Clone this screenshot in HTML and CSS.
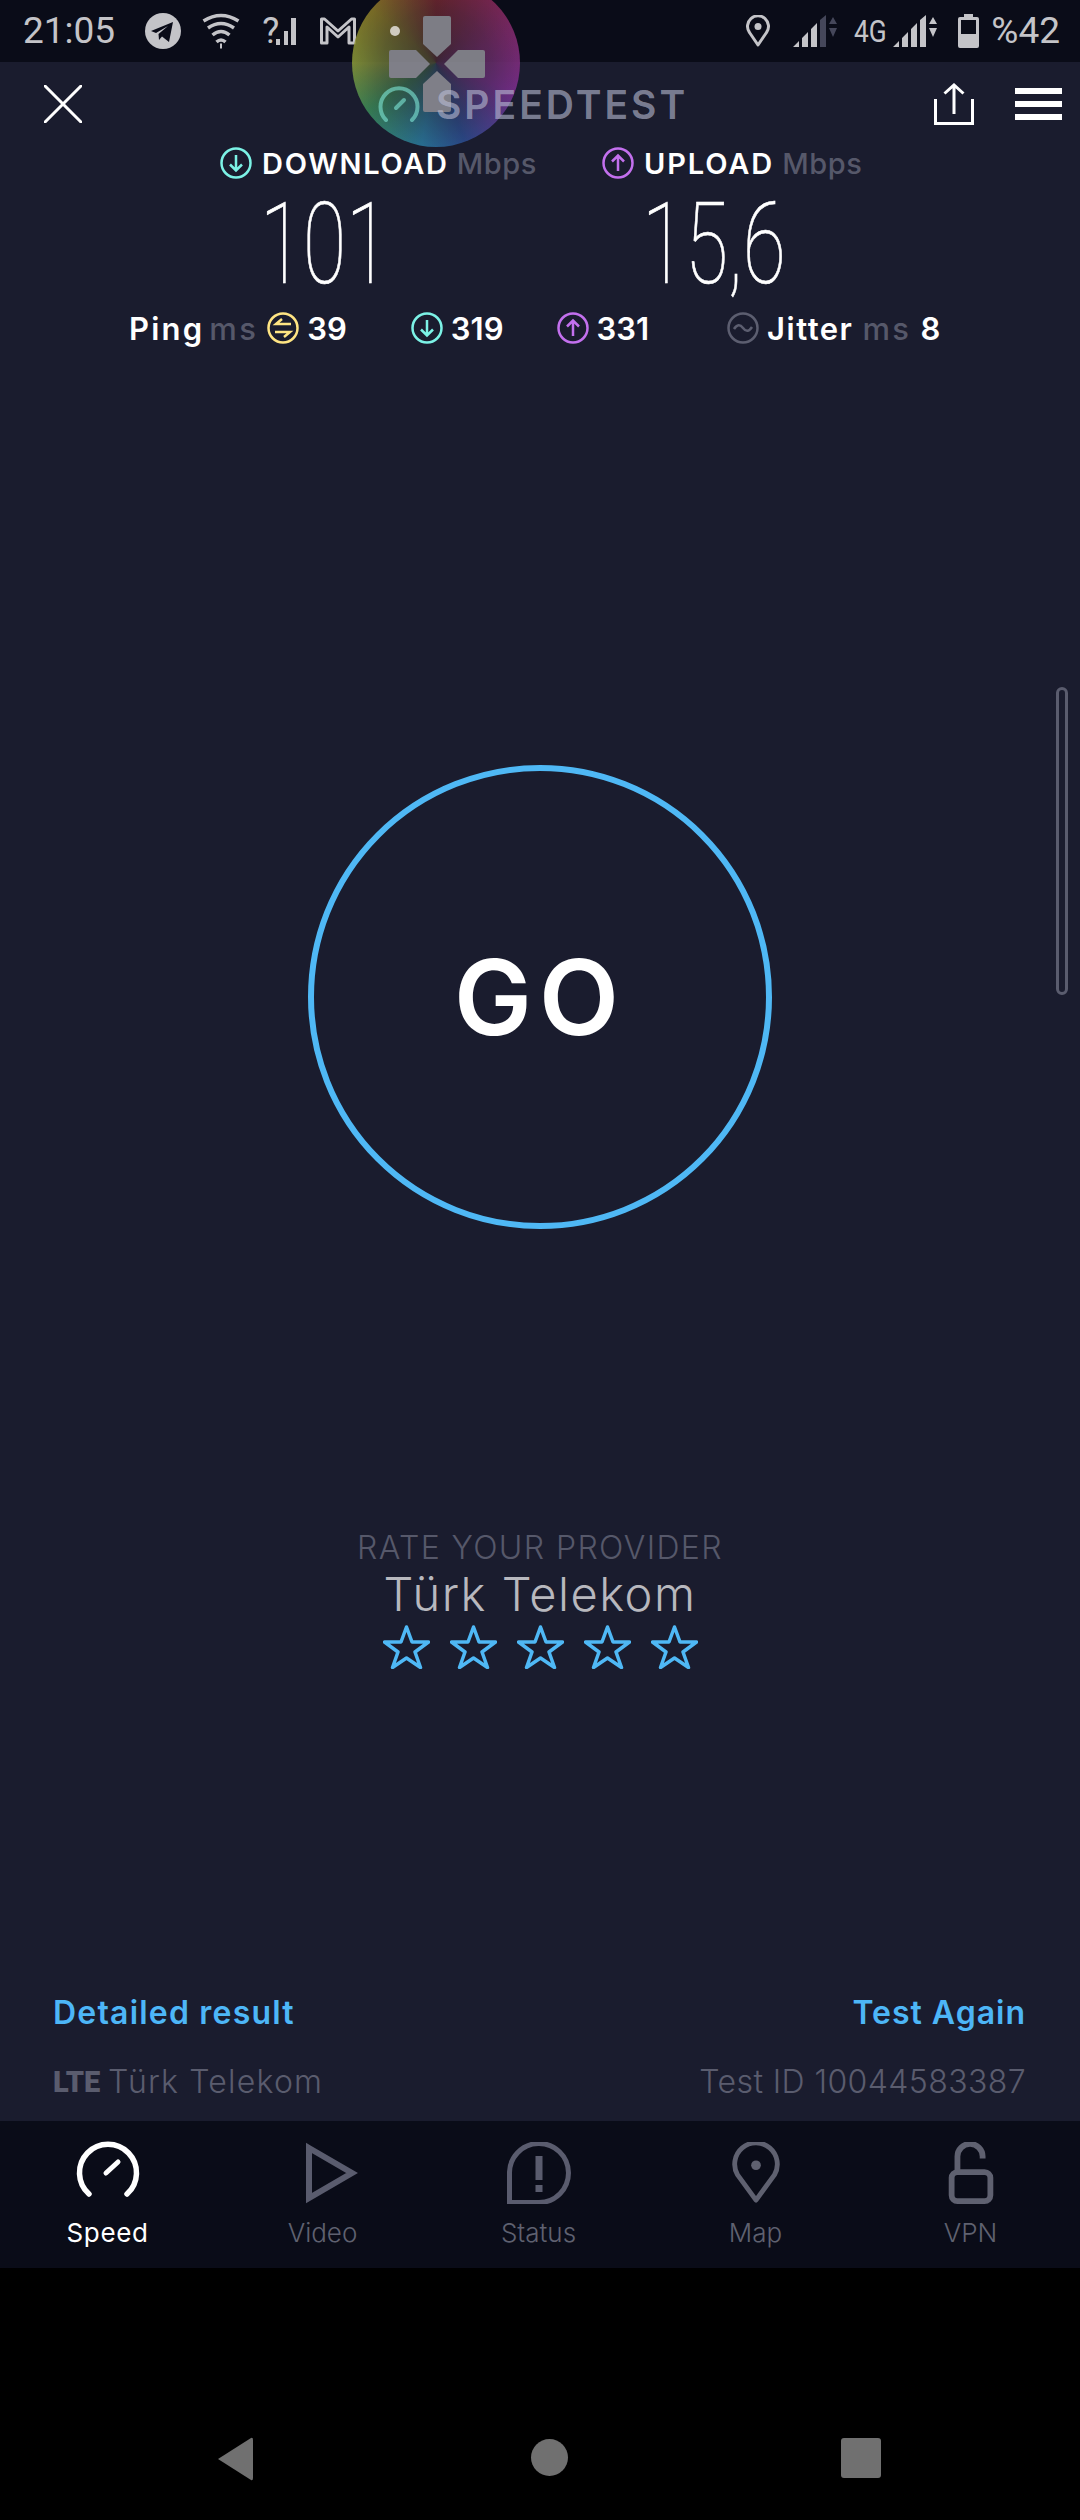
FILE: index.html
```html
<!DOCTYPE html>
<html lang="en">
<head>
    <meta charset="UTF-8">
    <meta name="viewport" content="width=device-width, initial-scale=1.0">
    <title>Speedtest</title>
    <link rel="stylesheet" href="styles.css">
</head>
<body>
    <div class="phone">
        <div class="statusbar">
            <span class="clock">21:05</span>
            <svg class="st-telegram" width="36" height="36" viewBox="0 0 36 36"><circle cx="18" cy="18" r="18" fill="#c4c4c8"/><path d="M6 18 L28 9 L24 29 L17 23.500 L14 27 L13.500 21 L23 13 L11 20 Z" fill="#0a0c18"/></svg>
            <svg class="st-wifi" width="38" height="36" viewBox="0 0 38 36" fill="none" stroke="#c4c4c8" stroke-width="3.500"><path d="M1.500 8 Q19 -3 36.500 8"/><path d="M6 15 Q19 6 32 15"/><path d="M10.500 22 Q19 15 27.500 22"/><path d="M14.500 29 Q19 25 23.500 29"/><path d="M18 33 h2" stroke-width="5"/></svg>
            <span class="st-unknown">?</span>
            <svg class="st-bars" width="20" height="28" viewBox="0 0 20 28" fill="#c4c4c8"><rect x="0" y="22" width="4" height="6"/><rect x="8" y="14" width="4" height="14"/><rect x="15" y="1" width="5" height="27"/></svg>
            <svg class="st-gmail" width="36" height="28" viewBox="0 0 36 28" fill="none" stroke="#c4c4c8" stroke-width="3" stroke-linejoin="round"><path d="M1.500 26 V2 H4.500 L18 14 L31.500 2 H34.500 V26 H29 V10 L18 20 L7 10 V26 Z"/></svg>
            <div class="st-right">
                <svg class="st-pin" width="24" height="32" viewBox="0 0 24 32" fill="none" stroke="#c4c4c8" stroke-width="3"><path d="M12 30 L3.500 17.500 A10.500 10.500 0 1 1 20.500 17.500 Z" stroke-linejoin="round"/><circle cx="12" cy="11.500" r="3.500" fill="#c4c4c8" stroke="none"/></svg>
                <svg class="st-signal-a" width="45" height="32" viewBox="0 0 45 32"><path d="M0 32 L6 26 V32 Z M9 23 L15 17 V32 H9 Z M18 14 L24 8 V32 H18 Z" fill="#c4c4c8"/><path d="M27 5 L33 0 V32 H27 Z" fill="#45475a"/><path d="M36 9 L40 2 L44 9 Z M36 13 H44 L40 22 Z" fill="#45475a"/></svg>
                <span class="st-net">4G</span>
                <svg class="st-signal-b" width="45" height="32" viewBox="0 0 45 32"><path d="M0 32 L6 26 V32 Z M9 23 L15 17 V32 H9 Z M18 14 L24 8 V32 H18 Z M27 5 L33 0 V32 H27 Z" fill="#c4c4c8"/><path d="M36 9 L40 2 L44 9 Z M36 13 H44 L40 22 Z" fill="#c4c4c8"/></svg>
                <svg class="st-battery" width="21" height="34" viewBox="0 0 21 34"><path d="M6 0 H15 V3 H19 Q21 3 21 5 V32 Q21 34 19 34 H2 Q0 34 0 32 V5 Q0 3 2 3 H6 Z" fill="#c4c4c8"/><rect x="3" y="6" width="15" height="14" fill="#0a0c18"/></svg>
                <span class="clock st-percent">%42</span>
            </div>
        </div>

        <main class="main">
            <header class="topbar">
                <svg class="close-icon" width="38" height="38" viewBox="0 0 38 38" stroke="#fff" stroke-width="3" stroke-linecap="round"><path d="M1 1 L37 37 M37 1 L1 37"/></svg>
                <div class="logo">
                    <svg class="logo-gauge" width="42" height="36" viewBox="0 0 42 36" fill="none" stroke="#7fe8d8" stroke-width="4" stroke-linecap="round"><path d="M8 34 A18.500 18.500 0 1 1 34 34"/><path d="M18 22 L26 14"/></svg>
                    <span class="logo-text">SPEEDTEST</span>
                </div>
                <div class="actions">
                    <svg width="40" height="42" viewBox="0 0 40 42" fill="none" stroke="#fff" stroke-width="3"><path d="M1.500 16 V40.500 H38.500 V16"/><path d="M20 31 V2 M10.500 10.500 L20 2 L29.500 10.500"/></svg>
                    <div class="menu-icon"><span></span><span></span><span></span></div>
                </div>
            </header>

            <section class="speeds">
                <div class="speed-col">
                    <div class="speed-label">
                        <svg class="dir-icon" viewBox="0 0 32 32" fill="none" stroke="#7cf2e6" stroke-width="2.500"><circle cx="16" cy="16" r="14.500"/><path d="M16 8 V23 M10 17.500 L16 23.500 L22 17.500"/></svg>
                        <b class="label-down">DOWNLOAD</b><span class="unit">Mbps</span>
                    </div>
                    <div class="speed-value">101</div>
                </div>
                <div class="speed-col">
                    <div class="speed-label">
                        <svg class="dir-icon" viewBox="0 0 32 32" fill="none" stroke="#c370ee" stroke-width="2.500"><circle cx="16" cy="16" r="14.500"/><path d="M16 24 V9 M10 14.500 L16 8.500 L22 14.500"/></svg>
                        <b class="label-up">UPLOAD</b><span class="unit">Mbps</span>
                    </div>
                    <div class="speed-value">15,6</div>
                </div>
            </section>

            <section class="latency">
                <b class="lat-ping">Ping</b><span class="unit lat-ms">ms</span>
                <svg class="dir-icon lat-icon-ping" viewBox="0 0 32 32" fill="none" stroke="#ffe583" stroke-width="2.500"><circle cx="16" cy="16" r="14.500"/><path d="M24 12 H9 L15 7 M8 20 H23 L17 25"/></svg>
                <b class="lat-num">39</b>
                <svg class="dir-icon lat-icon-down" viewBox="0 0 32 32" fill="none" stroke="#7cf2e6" stroke-width="2.500"><circle cx="16" cy="16" r="14.500"/><path d="M16 8 V23 M10 17.500 L16 23.500 L22 17.500"/></svg>
                <b class="lat-num">319</b>
                <svg class="dir-icon lat-icon-up" viewBox="0 0 32 32" fill="none" stroke="#c370ee" stroke-width="2.500"><circle cx="16" cy="16" r="14.500"/><path d="M16 24 V9 M10 14.500 L16 8.500 L22 14.500"/></svg>
                <b class="lat-num">331</b>
                <svg class="dir-icon lat-icon-jitter" viewBox="0 0 32 32" fill="none" stroke="#5c5e70" stroke-width="2.500"><circle cx="16" cy="16" r="14.500"/><path d="M7 17 Q11.500 10 16 16 T25 15"/></svg>
                <b class="lat-jitter">Jitter</b><span class="unit lat-ms2">ms</span><b class="lat-num lat-eight">8</b>
            </section>

            <div class="go-wrap"><div class="go-circle">GO</div></div>

            <section class="rate">
                <div class="rate-title">RATE YOUR PROVIDER</div>
                <div class="rate-name">Türk Telekom</div>
                <div class="stars">
                    <svg width="47" height="44" viewBox="0 0 47 44"><path class="star" d="M23.500 2 L29 17 H45.500 L32 27 L37.500 42.500 L23.500 33 L9.500 42.500 L15 27 L1.500 17 H18 Z"/></svg>
                    <svg width="47" height="44" viewBox="0 0 47 44"><path class="star" d="M23.500 2 L29 17 H45.500 L32 27 L37.500 42.500 L23.500 33 L9.500 42.500 L15 27 L1.500 17 H18 Z"/></svg>
                    <svg width="47" height="44" viewBox="0 0 47 44"><path class="star" d="M23.500 2 L29 17 H45.500 L32 27 L37.500 42.500 L23.500 33 L9.500 42.500 L15 27 L1.500 17 H18 Z"/></svg>
                    <svg width="47" height="44" viewBox="0 0 47 44"><path class="star" d="M23.500 2 L29 17 H45.500 L32 27 L37.500 42.500 L23.500 33 L9.500 42.500 L15 27 L1.500 17 H18 Z"/></svg>
                    <svg width="47" height="44" viewBox="0 0 47 44"><path class="star" d="M23.500 2 L29 17 H45.500 L32 27 L37.500 42.500 L23.500 33 L9.500 42.500 L15 27 L1.500 17 H18 Z"/></svg>
                </div>
            </section>

            <footer class="result">
                <div class="result-row">
                    <a class="link link-detail">Detailed result</a>
                    <a class="link link-again">Test Again</a>
                </div>
                <div class="result-row info-row">
                    <span class="provider"><b class="lte">LTE</b><span class="provider-name">Türk Telekom</span></span>
                    <span class="test-id">Test ID 10044583387</span>
                </div>
            </footer>

            <div class="scroll-thumb"></div>
        </main>

        <nav class="tabs">
            <div class="tab active">
                <svg width="64" height="56" viewBox="0 0 64 56" fill="none" stroke="#fff" stroke-width="5.500" stroke-linecap="round"><path d="M13 52 A28.500 28.500 0 1 1 51 52"/><path d="M30 31 L42 20" stroke-width="5"/></svg>
                <span>Speed</span>
            </div>
            <div class="tab">
                <svg class="video-icon" width="54" height="62" viewBox="0 0 54 62" fill="none" stroke="#5a5c6e" stroke-width="6"><path d="M4 6 L47 31 L4 56 Z"/></svg>
                <span>Video</span>
            </div>
            <div class="tab">
                <svg width="64" height="62" viewBox="0 0 64 62" fill="none" stroke="#5a5c6e" stroke-width="5"><path d="M2.500 60 V32 A29.500 29.500 0 1 1 32 60.500 H2.500 Z"/><path d="M32 14 V38" stroke-width="7"/><path d="M32 43 V50" stroke-width="7"/></svg>
                <span>Status</span>
            </div>
            <div class="tab">
                <svg width="50" height="64" viewBox="0 0 50 64" fill="none" stroke="#5f6170" stroke-width="5"><path d="M25 60 L6 34 A22 22 0 1 1 44 34 Z" stroke-linejoin="round"/><circle cx="25" cy="24" r="5" fill="#5f6170" stroke="none"/></svg>
                <span>Map</span>
            </div>
            <div class="tab">
                <svg width="46" height="64" viewBox="0 0 46 64" fill="none" stroke="#5f6170" stroke-width="6"><rect x="3" y="31" width="40" height="30" rx="6"/><path d="M9 31 V15 A13 13 0 0 1 35 15 V17"/></svg>
                <span>VPN</span>
            </div>
        </nav>

        <div class="softkeys">
            <svg width="38" height="44" viewBox="0 0 38 44"><path d="M2 22 L35 1 Q37 0 37 3 V41 Q37 44 35 43 Z" fill="#707070"/></svg>
            <div class="key-home"></div>
            <div class="key-recent"></div>
        </div>

        <!-- floating game button, sits over the header -->
        <div class="bubble">
            <span class="bubble-dot"></span>
            <svg class="bubble-pad" width="96" height="96" viewBox="0 0 96 96" fill="#8d8d95"><path d="M34 2 Q34 0 36 0 H60 Q62 0 62 2 V28 L48 41 L34 28 Z"/><path d="M34 94 Q34 96 36 96 H60 Q62 96 62 94 V68 L48 55 L34 68 Z"/><path d="M2 34 Q0 34 0 36 V60 Q0 62 2 62 H27 L41 48 L27 34 Z"/><path d="M94 34 Q96 34 96 36 V60 Q96 62 94 62 H69 L55 48 L69 34 Z"/></svg>
        </div>
    </div>
</body>
</html>
```

FILE: styles.css
```css
* {
    box-sizing: border-box;
}
body {
    margin: 0;
    background: #000;
    font-family: Inter, "Noto Sans", sans-serif;
}
.phone {
    position: relative;
    width: 1080px;
    height: 2520px;
    display: flex;
    flex-direction: column;
    overflow: hidden;
    background: #000;
}

/* status bar */
.statusbar {
    height: 62px;
    flex: none;
    display: flex;
    align-items: center;
    padding-left: 23px;
    background: #0a0c18;
    color: #c4c4c8;
}
.clock {
    font-family: Roboto, sans-serif;
    font-size: 37px;
    line-height: 62px;
}
.st-telegram {
    margin-left: 30px;
}
.st-wifi {
    margin-left: 21px;
}
.st-unknown {
    margin-left: 22px;
    width: 14px;
    font-family: Roboto, sans-serif;
    font-size: 36px;
    line-height: 62px;
}
.st-bars {
    margin-left: 0;
}
.st-gmail {
    margin-left: 24px;
}
.st-right {
    display: flex;
    align-items: center;
    margin-left: auto;
    padding-right: 20px;
}
.st-signal-a {
    margin-left: 23px;
}
.st-net {
    margin-left: 16px;
    font-family: Roboto, sans-serif;
    font-size: 32px;
    transform: scaleX(.82);
    transform-origin: left center;
    width: 39px;
}
.st-battery {
    margin-left: 20px;
}
.st-percent {
    margin-left: 12px;
}
.st-signal-b {
    margin-left: 0;
}

/* main area */
.main {
    position: relative;
    height: 2059px;
    flex: none;
    display: flex;
    flex-direction: column;
    background: #1a1c2e;
    color: #fff;
}
.topbar {
    height: 74px;
    display: flex;
    align-items: center;
    padding: 10px 18px 0 44px;
}
.logo {
    position: relative;
    z-index: 2;
    display: flex;
    align-items: center;
    margin-left: 296px;
    gap: 16px;
}
.logo-gauge {
    opacity: .6;
}
.logo-text {
    font-size: 39px;
    font-weight: 600;
    letter-spacing: 3px;
    color: rgba(185, 188, 212, .62);
}
.actions {
    display: flex;
    align-items: center;
    margin-left: auto;
    gap: 41px;
}
.menu-icon {
    display: flex;
    flex-direction: column;
    gap: 7px;
}
.menu-icon span {
    display: block;
    width: 47px;
    height: 6px;
    background: #fff;
}

.speeds {
    display: flex;
    padding-left: 220px;
}
.speed-col {
    width: 382px;
}
.speed-label {
    display: flex;
    align-items: center;
    height: 54px;
    font-size: 29px;
}
.speed-label b {
    margin-left: 10px;
    font-weight: 600;
}
.label-down {
    letter-spacing: 1.700px;
}
.label-up {
    letter-spacing: 1.900px;
}
.dir-icon {
    width: 32px;
    height: 32px;
    flex: none;
}
.unit {
    margin-left: 8px;
    color: #56586a;
    font-weight: 500;
    letter-spacing: .6px;
}
.speed-value {
    height: 118px;
    margin-left: 40px;
    font-family: Roboto, sans-serif;
    font-size: 114px;
    font-weight: 100;
    line-height: 108px;
    -webkit-text-stroke: .7px #fff;
    transform: scaleX(.69);
    transform-origin: left center;
}

.latency {
    display: flex;
    align-items: center;
    height: 40px;
    padding-left: 129px;
    font-size: 31px;
}
.latency b {
    font-weight: 600;
}
.lat-ping {
    letter-spacing: 2.200px;
}
.lat-ms {
    margin-left: 5px;
    letter-spacing: 2.400px;
}
.lat-icon-ping {
    margin-left: 9px;
}
.lat-num {
    margin-left: 8px;
}
.lat-icon-down {
    margin-left: 64px;
}
.lat-icon-up {
    margin-left: 53px;
}
.lat-icon-jitter {
    margin-left: 78px;
}
.lat-jitter {
    margin-left: 8px;
    letter-spacing: 1.500px;
}
.lat-ms2 {
    margin-left: 9px;
    letter-spacing: 2.400px;
}
.lat-eight {
    margin-left: 9px;
}

.go-wrap {
    display: flex;
    justify-content: center;
    margin-top: 417px;
}
.go-circle {
    width: 464px;
    height: 464px;
    display: flex;
    align-items: center;
    justify-content: center;
    border: 6px solid #4fb8f5;
    border-radius: 50%;
    font-size: 104px;
    font-weight: 600;
    letter-spacing: 7px;
}

.rate {
    display: flex;
    flex-direction: column;
    align-items: center;
    margin-top: 301px;
}
.rate-title {
    height: 36px;
    font-size: 32px;
    font-weight: 300;
    line-height: 36px;
    letter-spacing: 1.400px;
    color: #56586a;
}
.rate-name {
    height: 55px;
    font-size: 47px;
    font-weight: 300;
    line-height: 56px;
    letter-spacing: 1.500px;
    color: #b8b8be;
}
.stars {
    display: flex;
    gap: 20px;
    margin-top: 4px;
}
.star {
    fill: none;
    stroke: #4fb8f5;
    stroke-width: 3.500;
    stroke-linejoin: round;
}

.result {
    margin-top: auto;
    padding: 0 54px 20px 53px;
}
.result-row {
    display: flex;
    justify-content: space-between;
    align-items: center;
}
.link {
    font-size: 32px;
    font-weight: 600;
    color: #4db6f7;
}
.link-detail {
    letter-spacing: 1.200px;
}
.link-again {
    letter-spacing: 1px;
}
.info-row {
    margin-top: 30px;
    font-size: 32px;
    font-weight: 300;
    color: #5a5c6e;
}
.provider {
    display: flex;
    align-items: center;
}
.provider-name {
    letter-spacing: 1.200px;
}
.test-id {
    letter-spacing: .4px;
}
.lte {
    width: 55px;
    font-family: Roboto, sans-serif;
    font-size: 29px;
    font-weight: 900;
}
.scroll-thumb {
    position: absolute;
    top: 625px;
    right: 12px;
    width: 12px;
    height: 308px;
    border: 3px solid #5a5c6e;
    border-radius: 6px;
}

/* bottom tabs */
.tabs {
    height: 147px;
    flex: none;
    display: grid;
    grid-template-columns: 215px 215px 217px 217px 213px;
    background: #0a0c18;
}
.tab {
    display: flex;
    flex-direction: column;
    align-items: center;
    justify-content: flex-end;
    padding-bottom: 20px;
    color: #5f6170;
    font-size: 26px;
    font-weight: 300;
}
.tab svg {
    height: 62px;
    margin-bottom: 13px;
}
.tab.active {
    color: #fff;
    font-weight: 400;
    letter-spacing: .6px;
}
.tab.active svg {
    margin-bottom: 16px;
}
.video-icon {
    margin-left: 18px;
}

/* android keys */
.softkeys {
    flex: 1;
    display: flex;
    align-items: flex-start;
    padding: 169px 0 0 216px;
}
.key-home {
    width: 37px;
    height: 37px;
    margin: 2px 0 0 277px;
    border-radius: 50%;
    background: #707070;
}
.key-recent {
    width: 40px;
    height: 40px;
    margin: 1px 0 0 273px;
    border-radius: 3px;
    background: #707070;
}

/* overlay */
.bubble {
    position: absolute;
    z-index: 1;
    left: 352px;
    top: -21px;
    width: 168px;
    height: 168px;
    border-radius: 50%;
    background:
        radial-gradient(circle, rgba(45, 40, 50, .75) 0, rgba(40, 40, 50, .35) 45%, rgba(26, 28, 46, 0) 72%, rgba(26, 28, 46, .35) 100%),
        conic-gradient(#82262e 0deg, #852b72 70deg, #7d2f90 110deg, #2c4c90 160deg, #2a7aa0 190deg, #3a8a58 235deg, #8a9a38 270deg, #8a7a28 310deg, #82262e 360deg);
    opacity: .88;
}
.bubble-dot {
    position: absolute;
    left: 38px;
    top: 47px;
    width: 10px;
    height: 10px;
    border-radius: 50%;
    background: #ece6d8;
}
.bubble-pad {
    position: absolute;
    left: 37px;
    top: 37px;
}
```
